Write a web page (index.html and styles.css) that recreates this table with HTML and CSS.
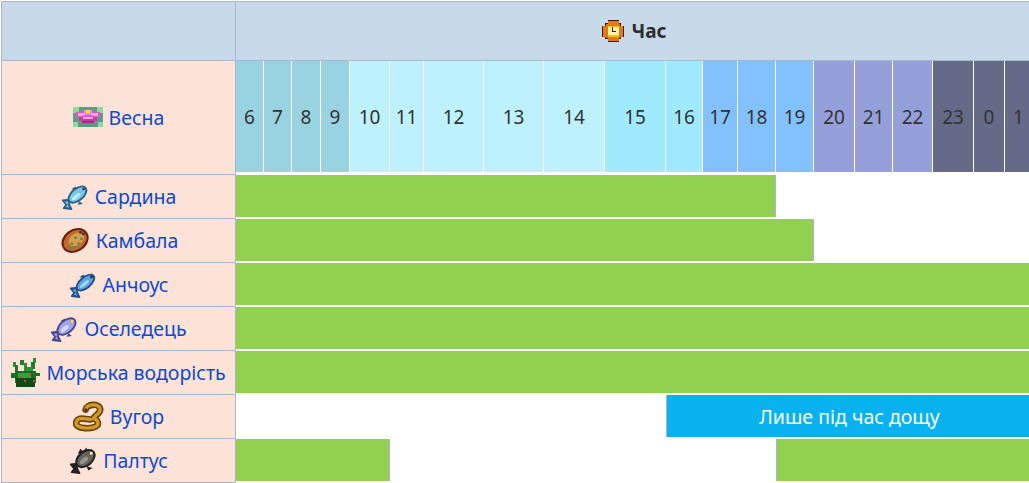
FILE: index.html
```html
<!DOCTYPE html>
<html lang="uk">
<head>
<meta charset="utf-8">
<title>Весна — риба</title>
<link rel="stylesheet" href="styles.css">
</head>
<body>
<div class="table">
  <div class="corner"></div>
  <div class="hourhead">
    <svg class="ico-clock" viewBox="0 0 16 16" shape-rendering="crispEdges">
      <rect x="4" y="0" width="8" height="16" fill="#4a1610"/>
      <rect x="0" y="4" width="16" height="8" fill="#4a1610"/>
      <rect x="2" y="2" width="12" height="12" fill="#4a1610"/>
      <rect x="4" y="1" width="8" height="14" fill="#e07a18"/>
      <rect x="1" y="4" width="14" height="8" fill="#e07a18"/>
      <rect x="3" y="3" width="10" height="10" fill="#e07a18"/>
      <rect x="4" y="4" width="8" height="8" fill="#fff2a0"/>
      <rect x="4" y="4" width="8" height="1" fill="#f0c020"/>
      <rect x="4" y="11" width="8" height="1" fill="#f0c020"/>
      <rect x="7" y="5" width="1" height="4" fill="#3a2010"/>
      <rect x="7" y="8" width="3" height="1" fill="#3a2010"/>
    </svg>
    <span>Час</span>
  </div>

  <div class="label season">
    <svg class="ico-season" viewBox="0 0 30 20" shape-rendering="crispEdges">
      <rect x="0" y="0" width="30" height="20" fill="#5e9c86"/>
      <rect x="0" y="0" width="6" height="6" fill="#8fd7a0"/>
      <rect x="24" y="0" width="6" height="6" fill="#8fd7a0"/>
      <rect x="0" y="15" width="5" height="5" fill="#8fd7a0"/>
      <rect x="25" y="15" width="5" height="5" fill="#8fd7a0"/>
      <rect x="3" y="5" width="24" height="5" fill="#e455c4"/>
      <rect x="6" y="10" width="18" height="4" fill="#c83aa8"/>
      <rect x="9" y="14" width="12" height="2" fill="#a02a88"/>
      <rect x="5" y="6" width="6" height="3" fill="#f7a6e6"/>
      <rect x="19" y="6" width="6" height="3" fill="#f7a6e6"/>
      <rect x="11" y="3" width="8" height="5" fill="#f58ad8"/>
      <rect x="13" y="3" width="4" height="3" fill="#f4e23a"/>
      <rect x="10" y="10" width="10" height="2" fill="#f7a6e6"/>
    </svg>
    <a>Весна</a>
  </div>
  <div class="hour dawn">6</div>
  <div class="hour dawn">7</div>
  <div class="hour dawn">8</div>
  <div class="hour dawn">9</div>
  <div class="hour day">10</div>
  <div class="hour day">11</div>
  <div class="hour day">12</div>
  <div class="hour day">13</div>
  <div class="hour day">14</div>
  <div class="hour noon">15</div>
  <div class="hour noon">16</div>
  <div class="hour eve">17</div>
  <div class="hour eve">18</div>
  <div class="hour eve">19</div>
  <div class="hour dusk">20</div>
  <div class="hour dusk">21</div>
  <div class="hour dusk">22</div>
  <div class="hour night">23</div>
  <div class="hour night">0</div>
  <div class="hour night last">1</div>

  <!-- Сардина -->
  <div class="label">
    <svg class="ico" viewBox="0 0 16 16">
      <path d="M1 10.5 L5 10 L4.5 12.5 L6 15.5 L1.5 15 L3 13 Z" fill="#2b5f86" stroke="#2b5f86" stroke-width="1" stroke-linejoin="round"/>
      <path d="M2 11.3 L4.3 11 L3.8 12.8 L4.8 14.6 L2.8 14.3 L3.6 13 Z" fill="#79c6e6"/>
      <path d="M6 4 L8.5 2.5 L9 5 Z M10.5 11 L12.5 12.5 L9.5 13 Z" fill="#2b5f86"/>
      <ellipse cx="9.4" cy="7.2" rx="6.6" ry="3.9" transform="rotate(-40 9.4 7.2)" fill="#2b5f86"/>
      <ellipse cx="9.4" cy="7.2" rx="5.5" ry="2.8" transform="rotate(-40 9.4 7.2)" fill="#79c6e6"/>
      <ellipse cx="8.6" cy="8.4" rx="3" ry="1.1" transform="rotate(-40 8.6 8.4)" fill="#b9ecf8"/>
      <rect x="12.2" y="3.4" width="1.3" height="1.3" fill="#143050"/>
    </svg>
    <a>Сардина</a>
  </div>
  <div class="bar green end" style="grid-column: 2 / 15"></div>
  <div class="gap" style="grid-column: 15 / -1"></div>

  <!-- Камбала -->
  <div class="label">
    <svg class="ico big" viewBox="0 0 16 16">
      <ellipse cx="8.3" cy="8" rx="7.5" ry="5.9" transform="rotate(-35 8.3 8)" fill="#6e200e"/>
      <ellipse cx="8.3" cy="8" rx="6.4" ry="4.8" transform="rotate(-35 8.3 8)" fill="#c16a2c"/>
      <ellipse cx="9" cy="7.4" rx="4.4" ry="3" transform="rotate(-35 9 7.4)" fill="#dc9a4c"/>
      <rect x="6" y="9" width="1.2" height="1.2" fill="#2e9a5a"/>
      <rect x="8" y="6" width="1.2" height="1.2" fill="#2e9a5a"/>
      <rect x="9.5" y="9" width="1.2" height="1.2" fill="#2e9a5a"/>
      <rect x="7.5" y="11" width="1.2" height="1.2" fill="#2e9a5a"/>
      <rect x="11" y="6.5" width="1.2" height="1.2" fill="#2e9a5a"/>
      <rect x="5" y="11.5" width="1.2" height="1.2" fill="#2e9a5a"/>
      <rect x="10.5" y="3.2" width="1.2" height="1.2" fill="#3a1a08"/>
      <rect x="12" y="4" width="1.2" height="1.2" fill="#3a1a08"/>
    </svg>
    <a>Камбала</a>
  </div>
  <div class="bar green end" style="grid-column: 2 / 16"></div>
  <div class="gap" style="grid-column: 16 / -1"></div>

  <!-- Анчоус -->
  <div class="label">
    <svg class="ico" viewBox="0 0 16 16">
      <path d="M1 10.5 L5 10 L4.5 12.5 L6 15.5 L1.5 15 L3 13 Z" fill="#244f86" stroke="#244f86" stroke-width="1" stroke-linejoin="round"/>
      <path d="M2 11.3 L4.3 11 L3.8 12.8 L4.8 14.6 L2.8 14.3 L3.6 13 Z" fill="#5aa6e4"/>
      <path d="M6 4 L8.5 2.5 L9 5 Z" fill="#244f86"/>
      <ellipse cx="9.4" cy="7.2" rx="6.6" ry="3.6" transform="rotate(-40 9.4 7.2)" fill="#244f86"/>
      <ellipse cx="9.4" cy="7.2" rx="5.5" ry="2.5" transform="rotate(-40 9.4 7.2)" fill="#5aa6e4"/>
      <ellipse cx="8.8" cy="8" rx="3.3" ry="0.9" transform="rotate(-40 8.8 8)" fill="#a6dcff"/>
      <rect x="12.2" y="3.4" width="1.3" height="1.3" fill="#0e1e38"/>
    </svg>
    <a>Анчоус</a>
  </div>
  <div class="bar green" style="grid-column: 2 / -1"></div>

  <!-- Оселедець -->
  <div class="label">
    <svg class="ico" viewBox="0 0 16 16">
      <path d="M1 10.5 L5 10 L4.5 12.5 L6 15.5 L1.5 15 L3 13 Z" fill="#46468a" stroke="#46468a" stroke-width="1" stroke-linejoin="round"/>
      <path d="M2 11.3 L4.3 11 L3.8 12.8 L4.8 14.6 L2.8 14.3 L3.6 13 Z" fill="#a3a3ea"/>
      <path d="M6 4 L8.5 2.5 L9 5 Z M10.5 11 L12.5 12.5 L9.5 13 Z" fill="#46468a"/>
      <ellipse cx="9.4" cy="7.2" rx="6.6" ry="4.1" transform="rotate(-40 9.4 7.2)" fill="#46468a"/>
      <ellipse cx="9.4" cy="7.2" rx="5.5" ry="3" transform="rotate(-40 9.4 7.2)" fill="#a3a3ea"/>
      <ellipse cx="8.4" cy="8.4" rx="2.8" ry="1.2" transform="rotate(-40 8.4 8.4)" fill="#d6d6ff"/>
      <rect x="12" y="3.4" width="1.5" height="1.5" fill="#f0e040"/>
    </svg>
    <a>Оселедець</a>
  </div>
  <div class="bar green" style="grid-column: 2 / -1"></div>

  <!-- Морська водорість -->
  <div class="label">
    <svg class="ico weed" viewBox="0 0 16 16" shape-rendering="crispEdges">
      <rect x="1" y="2" width="2" height="3" fill="#2b8f36"/>
      <rect x="2" y="4" width="2" height="4" fill="#1f7a2c"/>
      <rect x="12" y="0" width="2" height="3" fill="#2b8f36"/>
      <rect x="11" y="2" width="2" height="4" fill="#1f7a2c"/>
      <rect x="7" y="3" width="2" height="4" fill="#2b8f36"/>
      <rect x="5" y="1" width="2" height="3" fill="#1f7a2c"/>
      <rect x="9" y="5" width="3" height="4" fill="#2b8f36"/>
      <rect x="0" y="8" width="4" height="3" fill="#1a6e26"/>
      <rect x="12" y="8" width="4" height="2" fill="#1a6e26"/>
      <rect x="2" y="7" width="12" height="7" fill="#1a6e26"/>
      <rect x="3" y="11" width="10" height="5" fill="#0e4a18"/>
      <rect x="4" y="8" width="7" height="3" fill="#34a040"/>
      <rect x="5" y="10" width="1" height="1" fill="#c84a2a"/>
      <rect x="10" y="9" width="1" height="1" fill="#c84a2a"/>
      <rect x="7" y="12" width="1" height="1" fill="#c84a2a"/>
      <rect x="12" y="12" width="1" height="1" fill="#c84a2a"/>
    </svg>
    <a>Морська водорість</a>
  </div>
  <div class="bar green" style="grid-column: 2 / -1"></div>

  <!-- Вугор -->
  <div class="label">
    <svg class="ico big" viewBox="0 0 16 16">
      <path d="M6.5 4.5 C7 1.5 13.5 1 14 4 C14.5 6.5 11 7.5 10.5 9 C13 9.5 14 12.5 11 13.5 C8 14.5 4 14 2.5 13 C0.5 11.5 2 9 4.5 9 L9 9.5" fill="none" stroke="#6a4410" stroke-width="3.4" stroke-linecap="round"/>
      <path d="M6.5 4.5 C7 1.5 13.5 1 14 4 C14.5 6.5 11 7.5 10.5 9 C13 9.5 14 12.5 11 13.5 C8 14.5 4 14 2.5 13 C0.5 11.5 2 9 4.5 9 L9 9.5" fill="none" stroke="#d49a22" stroke-width="1.7" stroke-linecap="round"/>
      <circle cx="6.6" cy="4.6" r="0.7" fill="#3a2408"/>
    </svg>
    <a>Вугор</a>
  </div>
  <div class="gap" style="grid-column: 2 / 12"></div>
  <div class="bar rain" style="grid-column: 12 / -1">Лише під час дощу</div>

  <!-- Палтус -->
  <div class="label">
    <svg class="ico" viewBox="0 0 16 16">
      <path d="M1 10.5 L5 10 L4.5 12.5 L6 15.5 L1.5 15 L3 13 Z" fill="#222222" stroke="#222222" stroke-width="1" stroke-linejoin="round"/>
      <path d="M5 4.5 L6.5 1.5 L8 3 L10 0.8 L10.5 3 Z M10 11.5 L13.5 12.5 L11 14 Z" fill="#222222"/>
      <ellipse cx="9.4" cy="7.2" rx="6.6" ry="4.5" transform="rotate(-40 9.4 7.2)" fill="#222222"/>
      <ellipse cx="9.4" cy="7.2" rx="5.4" ry="3.3" transform="rotate(-40 9.4 7.2)" fill="#66665f"/>
      <ellipse cx="8.6" cy="8.2" rx="2.8" ry="1.4" transform="rotate(-40 8.6 8.2)" fill="#95958c"/>
      <rect x="12" y="3.4" width="1.5" height="1.5" fill="#e8e8e0"/>
    </svg>
    <a>Палтус</a>
  </div>
  <div class="bar green end" style="grid-column: 2 / 7"></div>
  <div class="gap" style="grid-column: 7 / 15"></div>
  <div class="bar green start" style="grid-column: 15 / -1"></div>
</div>
</body>
</html>
```

FILE: styles.css
```css
html, body {
  margin: 0;
  padding: 0;
  background: #ffffff;
  overflow: hidden;
}

body {
  font-family: "Noto Sans", "Open Sans", sans-serif;
  color: #333333;
}

.table {
  display: grid;
  grid-template-columns:
    235px 28px 28px 29px 29px 40px 34px 60px 60px 61px 61px
    37px 35px 38px 38px 41px 38px 40px 41px 31px 27px;
  grid-template-rows: 60px 114px repeat(7, 44px);
  width: 1031px;
  margin: 1px 0 0 1px;
}

.corner,
.hourhead {
  background: #c8daea;
  border-top: 1px solid #a8b8cc;
  border-bottom: 1px solid #a8b8cc;
  box-sizing: border-box;
}

.corner {
  grid-column: 1;
  border-left: 1px solid #a8b8cc;
  border-right: 1px solid #a8b8cc;
}

.hourhead {
  grid-column: 2 / -1;
  display: flex;
  align-items: center;
  justify-content: center;
  gap: 8px;
  font-weight: 700;
  font-size: 19px;
  color: #2e2e2e;
}

.ico-clock {
  width: 22px;
  height: 22px;
}

.label {
  grid-column: 1;
  background: #fde3d7;
  border-left: 1px solid #a8b8cc;
  border-right: 1px solid #a8b8cc;
  border-bottom: 1px solid #a8b8cc;
  box-sizing: border-box;
  display: flex;
  align-items: center;
  justify-content: center;
  gap: 6px;
  font-size: 19.5px;
  padding-bottom: 1px;
}

.label a {
  color: #0d49cf;
  text-decoration: none;
}

.ico {
  width: 28px;
  height: 28px;
}

.ico.big {
  width: 31px;
  height: 31px;
}

.ico.weed {
  width: 29px;
  height: 31px;
}

.ico-season {
  width: 30px;
  height: 20px;
}

.hour {
  display: flex;
  align-items: center;
  justify-content: center;
  font-size: 19px;
  color: #333333;
  margin-right: 1px;
  margin-bottom: 3px;
}

.hour.last {
  margin-right: 0;
}

.dawn  { background: #99d3e1; }
.day   { background: #bdf1fd; }
.noon  { background: #a0eafd; }
.eve   { background: #83c1fd; }
.dusk  { background: #95a0db; }
.night { background: #646a87; }

.bar {
  margin-bottom: 2px;
  box-sizing: border-box;
}

.green {
  background: #92d050;
}

.green.end {
  border-right: 1px solid #a8b4c4;
}

.green.start {
  border-left: 1px solid #a8b4c4;
}

.rain {
  background: #08b2ee;
  border-left: 1px solid #a8b4c4;
  color: #ffffff;
  font-size: 19.5px;
  display: flex;
  align-items: center;
  justify-content: center;
}

.gap {
  background: #ffffff;
}
```
